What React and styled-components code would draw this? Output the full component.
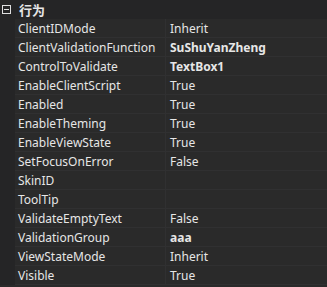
import styled, { createGlobalStyle } from "styled-components";

const GlobalStyle = createGlobalStyle`
  html, body {
    margin: 0;
    padding: 0;
    background: #252526;
  }
  body {
    font-family: "Noto Sans", "Noto Sans CJK SC", sans-serif;
  }
`;

const Grid = styled.div`
  width: 327px;
  height: 287px;
  overflow: hidden;
  background: #2a2a2a;
  color: #e6e6e6;
  font-size: 12px;
`;

const Category = styled.div`
  display: flex;
  align-items: center;
  height: 19px;
  background: #252526;
  font-size: 13px;
  font-weight: bold;
  font-family: "Noto Sans CJK SC", sans-serif;
`;

const Toggle = styled.span`
  box-sizing: border-box;
  width: 9px;
  height: 9px;
  margin: 0 8px 0 2px;
  border: 1px solid #e0e0e0;
  position: relative;

  &::after {
    content: "";
    position: absolute;
    left: 1px;
    right: 1px;
    top: 3px;
    height: 1px;
    background: #e0e0e0;
  }
`;

const Row = styled.div`
  display: grid;
  grid-template-columns: 15px 151px 1fr;
  height: 19px;
`;

const Gutter = styled.div`
  background: #252526;
`;

const Cell = styled.div`
  display: flex;
  align-items: center;
  padding-left: ${(p) => p.$pad}px;
  border-bottom: 1px solid #303031;
  border-right: ${(p) => (p.$divider ? "1px solid #303031" : "none")};
  font-weight: ${(p) => (p.$bold ? "bold" : "normal")};
  white-space: nowrap;
  overflow: hidden;
`;

const props = [
  ["ClientIDMode", "Inherit"],
  ["ClientValidationFunction", "SuShuYanZheng", true],
  ["ControlToValidate", "TextBox1", true],
  ["EnableClientScript", "True"],
  ["Enabled", "True"],
  ["EnableTheming", "True"],
  ["EnableViewState", "True"],
  ["SetFocusOnError", "False"],
  ["SkinID", ""],
  ["ToolTip", ""],
  ["ValidateEmptyText", "False"],
  ["ValidationGroup", "aaa", true],
  ["ViewStateMode", "Inherit"],
  ["Visible", "True"],
];

export default function App() {
  return (
    <>
      <GlobalStyle />
      <Grid>
        <Category>
          <Toggle />
          行为
        </Category>
        {props.map(([name, value, bold]) => (
          <Row key={name}>
            <Gutter />
            <Cell $pad={3} $divider>
              {name}
            </Cell>
            <Cell $pad={4} $bold={bold}>
              {value}
            </Cell>
          </Row>
        ))}
      </Grid>
    </>
  );
}
